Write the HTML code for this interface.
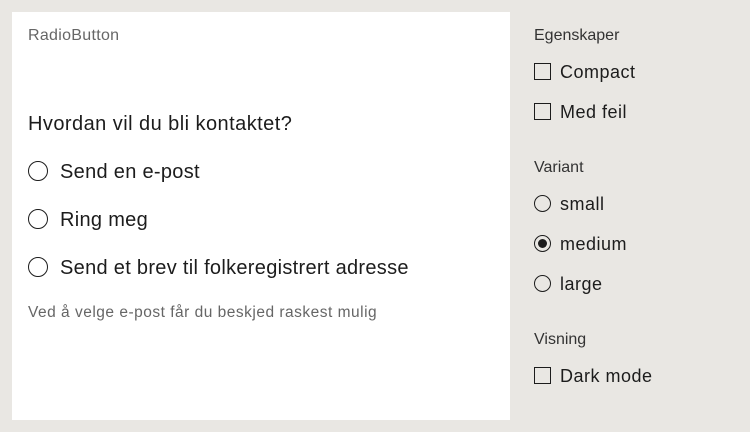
<!DOCTYPE html>
<html><head><meta charset="utf-8"><style>
body{margin:0;width:750px;height:432px;background:#e9e7e3;font-family:"Liberation Sans",sans-serif;color:#1c1c1c;position:relative;overflow:hidden}
.p{position:absolute;left:12px;top:12px;width:498px;height:408px;background:#fff}
.t{position:absolute;white-space:nowrap}
.r{position:absolute;width:20px;height:20px;border:1.5px solid #1c1c1c;border-radius:50%;box-sizing:border-box}
.sr{position:absolute;width:17px;height:17px;border:1.3px solid #1c1c1c;border-radius:50%;box-sizing:border-box}
.cb{position:absolute;width:17px;height:17px;border:1.3px solid #1c1c1c;box-sizing:border-box}
.L{font-size:20px;letter-spacing:0.3px}
.R{font-size:18px;letter-spacing:0.5px}
</style></head><body>
<div class="p"></div>
<div class="t" style="left:28px;top:27px;font-size:16px;color:#666;letter-spacing:0.3px">RadioButton</div>
<div class="t" style="left:28px;top:113px;font-size:20px;letter-spacing:0.45px">Hvordan vil du bli kontaktet?</div>
<div class="r" style="left:28px;top:161px"></div><div class="t L" style="left:60px;top:161px">Send en e-post</div>
<div class="r" style="left:28px;top:209px"></div><div class="t L" style="left:60px;top:209px">Ring meg</div>
<div class="r" style="left:28px;top:257px"></div><div class="t L" style="left:60px;top:257px">Send et brev til folkeregistrert adresse</div>
<div class="t" style="left:28px;top:304px;font-size:15.5px;color:#666;letter-spacing:0.5px">Ved å velge e-post får du beskjed raskest mulig</div>

<div class="t" style="left:534px;top:27px;font-size:16px;color:#333">Egenskaper</div>
<div class="cb" style="left:534px;top:63px"></div><div class="t R" style="left:560px;top:62px">Compact</div>
<div class="cb" style="left:534px;top:103px"></div><div class="t R" style="left:560px;top:102px">Med feil</div>
<div class="t" style="left:534px;top:159px;font-size:16px;color:#333">Variant</div>
<div class="sr" style="left:534px;top:195px"></div><div class="t R" style="left:560px;top:194px">small</div>
<div class="sr" style="left:534px;top:235px"></div><div style="position:absolute;left:538px;top:239px;width:9px;height:9px;border-radius:50%;background:#1c1c1c"></div><div class="t R" style="left:560px;top:234px">medium</div>
<div class="sr" style="left:534px;top:275px"></div><div class="t R" style="left:560px;top:274px">large</div>
<div class="t" style="left:534px;top:331px;font-size:16px;color:#333">Visning</div>
<div class="cb" style="left:534px;top:367px"></div><div class="t R" style="left:560px;top:366px">Dark mode</div>
</body></html>
